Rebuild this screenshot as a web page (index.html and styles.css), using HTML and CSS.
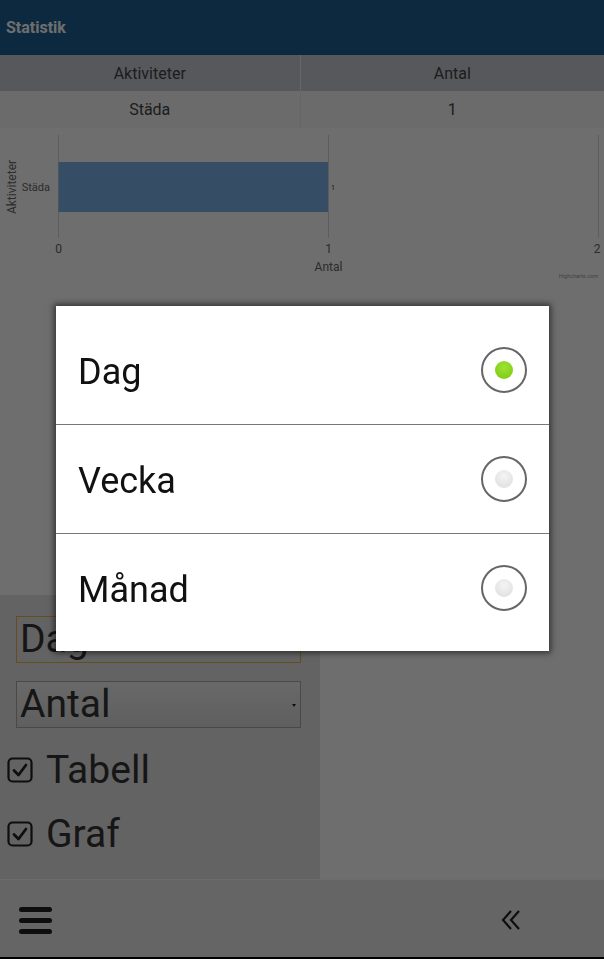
FILE: index.html
```html
<!DOCTYPE html>
<html lang="sv">

<head>
  <meta charset="UTF-8">
  <meta name="viewport" content="width=device-width, initial-scale=1.0">
  <title>Statistik</title>
  <link rel="stylesheet" href="styles.css">
</head>

<body>
  <div class="page">
    <header class="topbar">
      <span class="title">Statistik</span>
    </header>

    <table class="stats">
      <colgroup>
        <col class="col-name">
        <col>
      </colgroup>
      <thead>
        <tr>
          <th>Aktiviteter</th>
          <th>Antal</th>
        </tr>
      </thead>
      <tbody>
        <tr>
          <td>Städa</td>
          <td>1</td>
        </tr>
      </tbody>
    </table>

    <section class="chart">
      <svg class="chart-svg" width="604" height="160" viewBox="0 0 604 160">
        <line x1="58.5" y1="7" x2="58.5" y2="110" class="grid" />
        <line x1="328.5" y1="7" x2="328.5" y2="110" class="grid" />
        <line x1="598.5" y1="7" x2="598.5" y2="110" class="grid" />
        <rect x="58.5" y="34" width="269.5" height="50" class="bar" />
        <text x="331" y="62" class="data-label">1</text>
        <text x="50" y="63" class="axis-label" text-anchor="end">Städa</text>
        <text x="16" y="59" class="axis-title" text-anchor="middle" transform="rotate(-90 16 59)">Aktiviteter</text>
        <text x="58.5" y="125" class="tick-label" text-anchor="middle">0</text>
        <text x="328.5" y="125" class="tick-label" text-anchor="middle">1</text>
        <text x="597" y="125" class="tick-label" text-anchor="middle">2</text>
        <text x="328.5" y="143" class="axis-title" text-anchor="middle">Antal</text>
        <text x="598" y="150" class="credits" text-anchor="end">Highcharts.com</text>
      </svg>
    </section>

    <section class="settings">
      <div class="controls">
        <div class="select focused">Dag</div>
        <div class="select">Antal<span class="arrow"></span></div>
        <label class="check">
          <svg width="26" height="26" viewBox="0 0 26 26">
            <rect x="1.5" y="1.5" width="23" height="23" rx="4" class="box" />
            <polyline points="7,13.5 11.5,18 19,8" class="tick" />
          </svg>
          Tabell
        </label>
        <label class="check">
          <svg width="26" height="26" viewBox="0 0 26 26">
            <rect x="1.5" y="1.5" width="23" height="23" rx="4" class="box" />
            <polyline points="7,13.5 11.5,18 19,8" class="tick" />
          </svg>
          Graf
        </label>
      </div>
      <div class="filler"></div>
    </section>

    <footer class="bottombar">
      <div class="menu">
        <span></span>
        <span></span>
        <span></span>
      </div>
      <svg class="collapse" width="24" height="24" viewBox="0 0 24 24">
        <polyline points="11,2 3,11 11,20" />
        <polyline points="19,2 11,11 19,20" />
      </svg>
    </footer>
  </div>

  <div class="overlay"></div>

  <div class="dialog">
    <div class="option">
      <span class="option-text">Dag</span>
      <span class="radio checked"></span>
    </div>
    <div class="option">
      <span class="option-text">Vecka</span>
      <span class="radio"></span>
    </div>
    <div class="option">
      <span class="option-text">Månad</span>
      <span class="radio"></span>
    </div>
  </div>
</body>

</html>
```

FILE: styles.css
```css
body {
  margin: 0;
  padding: 0;
  background-color: #000;
  font-family: Roboto, "Liberation Sans", Arial, sans-serif;
}

.page {
  width: 604px;
  height: 957px;
  display: flex;
  flex-direction: column;
  background-color: #fff;
}

.topbar {
  height: 55px;
  flex-shrink: 0;
  display: flex;
  align-items: center;
  padding-left: 6px;
  background-color: #1c5f95;
}

.title {
  color: #fff;
  font-size: 16px;
  font-weight: bold;
}

.stats {
  width: 100%;
  border-collapse: collapse;
  table-layout: fixed;
  font-size: 16px;
  color: #444;
}

.col-name {
  width: 300px;
}

.stats th,
.stats td {
  padding: 0;
}

.stats th {
  height: 36px;
  font-weight: normal;
  background-color: #c9cdd6;
  border-right: 1px solid #f2f2f2;
}

.stats td {
  height: 37px;
  text-align: center;
  background-color: #f7f7f7;
  border-right: 1px solid #ededed;
}

.stats th:last-child,
.stats td:last-child {
  border-right: none;
}

.chart {
  height: 467px;
  flex-shrink: 0;
  background-color: #fff;
}

.chart-svg {
  display: block;
  font-family: Roboto, "Liberation Sans", Arial, sans-serif;
}

.grid {
  stroke: #d8d8d8;
  stroke-width: 1;
}

.bar {
  fill: #7cb5ec;
}

.axis-label {
  font-size: 11px;
  fill: #666;
}

.tick-label {
  font-size: 12px;
  fill: #666;
}

.axis-title {
  font-size: 12px;
  fill: #666;
}

.data-label {
  font-size: 7px;
  fill: #333;
}

.credits {
  font-size: 5.5px;
  fill: #999;
}

.settings {
  height: 284px;
  flex-shrink: 0;
  display: flex;
}

.controls {
  width: 320px;
  box-sizing: border-box;
  padding: 21px 0 0 16px;
  background-color: #e5e5e5;
}

.filler {
  flex: 1;
  background-color: #fff;
}

.select {
  position: relative;
  width: 285px;
  height: 47px;
  box-sizing: border-box;
  padding-left: 3px;
  border: 1px solid #a9a9a9;
  font-size: 39px;
  line-height: 45px;
  color: #333;
  background: linear-gradient(#f2f2f2, #dcdcdc);
}

.select.focused {
  border-color: #f0b04e;
  background: none;
  margin-bottom: 18px;
}

.arrow {
  position: absolute;
  right: 4px;
  top: 22px;
  border-left: 2px solid transparent;
  border-right: 2px solid transparent;
  border-top: 3px solid #222;
}

.check {
  display: flex;
  align-items: center;
  gap: 13px;
  height: 64px;
  margin-left: -9px;
  font-size: 39px;
  color: #333;
}

.check:first-of-type {
  margin-top: 10px;
}

.box {
  fill: none;
  stroke: #222;
  stroke-width: 2.2;
}

.tick {
  fill: none;
  stroke: #222;
  stroke-width: 2.8;
  stroke-linecap: round;
  stroke-linejoin: round;
}

.bottombar {
  flex: 1;
  display: flex;
  align-items: center;
  justify-content: space-between;
  padding: 0 80px 0 19px;
  border-top: 1px solid #fbfbfb;
  background-color: #e9e9e9;
}

.menu {
  display: flex;
  flex-direction: column;
  gap: 6px;
  margin-top: 4px;
}

.menu span {
  display: block;
  width: 33px;
  height: 5px;
  border-radius: 3px;
  background-color: #222;
}

.collapse {
  margin-top: 4px;
}

.collapse polyline {
  fill: none;
  stroke: #222;
  stroke-width: 2.2;
}

.overlay {
  position: fixed;
  top: 0;
  left: 0;
  right: 0;
  bottom: 0;
  background-color: rgba(0, 0, 0, 0.57);
}

.dialog {
  position: absolute;
  top: 306px;
  left: 56px;
  width: 493px;
  padding: 10px 0 9px;
  background-color: #fff;
  box-shadow: 0 0 6px 2px rgba(0, 0, 0, 0.55);
}

.option {
  height: 108px;
  display: flex;
  align-items: center;
  justify-content: space-between;
  padding: 0 22px;
  border-bottom: 1px solid #777;
}

.option:last-child {
  border-bottom: none;
}

.option-text {
  padding-top: 4px;
  font-size: 36px;
  color: #111;
}

.radio {
  width: 42px;
  height: 42px;
  border: 2px solid #666;
  border-radius: 50%;
  display: flex;
  align-items: center;
  justify-content: center;
}

.radio::after {
  content: "";
  width: 18px;
  height: 18px;
  border-radius: 50%;
  background: radial-gradient(circle at 50% 35%, #f4f4f4, #dcdcdc);
}

.radio.checked::after {
  background: radial-gradient(circle at 50% 35%, #9ee234, #78c80e);
}
```
